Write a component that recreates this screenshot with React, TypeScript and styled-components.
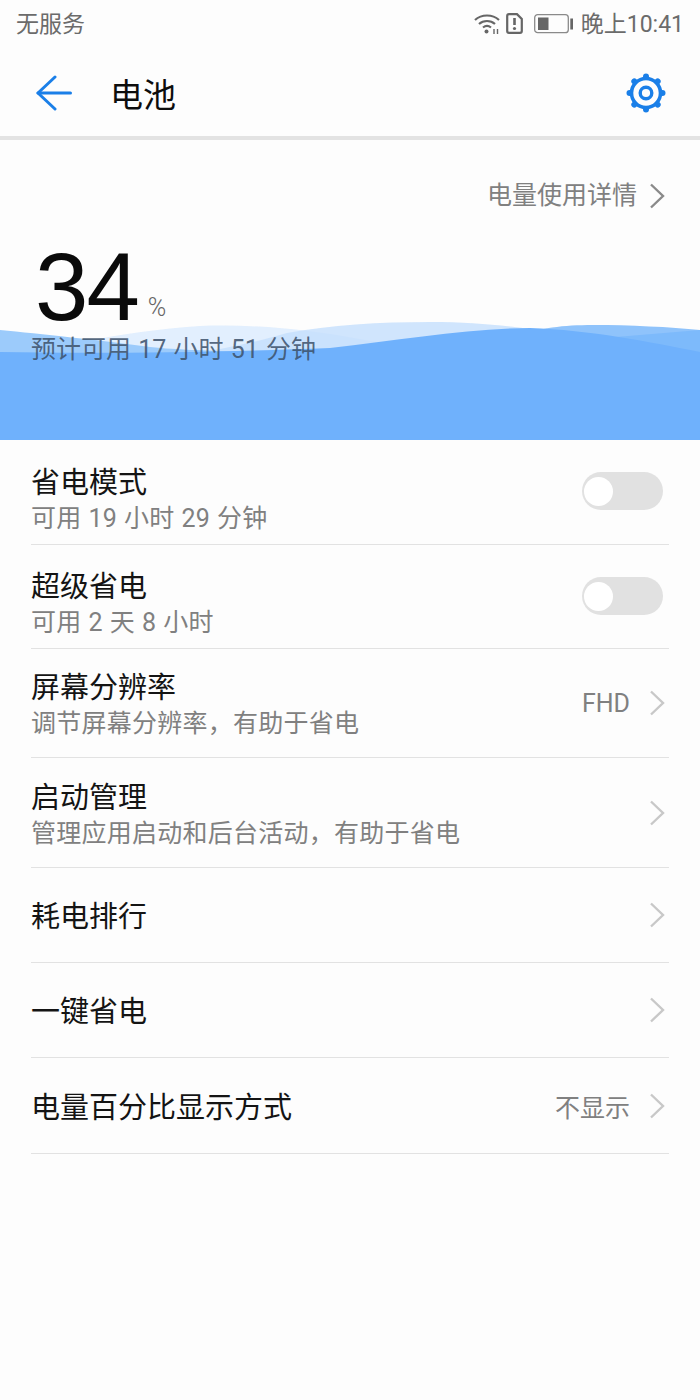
import { ReactNode } from "react";
import styled, { createGlobalStyle } from "styled-components";

const GlobalStyle = createGlobalStyle`
    html, body {
        margin: 0;
        padding: 0;
        background: #fdfdfd;
    }
    * {
        box-sizing: border-box;
    }
    body {
        font-family: Roboto, "Noto Sans CJK SC", sans-serif;
    }
`;

const Page = styled.div`
    width: 700px;
    height: 1400px;
    background: #fdfdfd;
    overflow: hidden;
`;

const StatusBar = styled.div`
    height: 50px;
    padding: 0 16px 6px 16px;
    display: flex;
    align-items: center;
    justify-content: space-between;
    color: #6b6b6b;
    font-size: 23px;
`;

const StatusRight = styled.div`
    display: flex;
    align-items: center;
    gap: 7px;
`;

const StatusIcons = styled.div`
    display: flex;
    align-items: center;
    gap: 6px;
    padding-top: 3px;
`;

const BatterySlot = styled.span`
    display: flex;
    margin-left: 5px;
`;

const Header = styled.header`
    height: 90px;
    padding: 0 34px 0 35px;
    display: flex;
    align-items: center;
    border-bottom: 4px solid #e3e3e3;
`;

const Title = styled.h1`
    margin: 0 0 0 37px;
    flex: 1;
    font-size: 33px;
    font-weight: 400;
    color: #0d0d0d;
`;

const Hero = styled.section`
    position: relative;
    height: 300px;
    overflow: hidden;
`;

const Wave = styled.svg`
    position: absolute;
    left: 0;
    bottom: 0;
    display: block;
`;

const HeroContent = styled.div`
    position: relative;
    height: 100%;
    padding: 38px 31px 0 31px;
    display: flex;
    flex-direction: column;
`;

const DetailLink = styled.div`
    align-self: flex-end;
    display: flex;
    align-items: center;
    gap: 12px;
    padding-right: 4px;
    color: #808080;
    font-size: 25px;
    line-height: 36px;
`;

const Reading = styled.div`
    margin-top: 31px;
    padding-left: 4px;
    display: flex;
    height: 87px;
`;

const Percent = styled.span`
    font-family: "Liberation Sans", Arial, sans-serif;
    font-size: 96px;
    line-height: 84px;
    letter-spacing: -2px;
    color: #0a0a0a;
`;

const PercentSign = styled.span`
    align-self: flex-end;
    margin: 0 0 12px 10px;
    font-size: 25px;
    line-height: 24px;
    font-weight: 300;
    color: #666;
`;

const Estimate = styled.div`
    font-size: 25px;
    line-height: 36px;
    word-spacing: 1px;
    color: rgba(60, 80, 105, 0.85);
`;

const List = styled.div`
    padding: 0 31px;
`;

const Row = styled.div<{ $height: number }>`
    height: ${(p) => p.$height}px;
    display: flex;
    align-items: center;
    justify-content: space-between;
    border-bottom: 1px solid #e2e2e2;
`;

const RowText = styled.div<{ $drop: number }>`
    margin-top: ${(p) => p.$drop}px;
    display: flex;
    flex-direction: column;
`;

const RowTitle = styled.div`
    font-size: 29px;
    line-height: 38px;
    color: #141414;
`;

const RowHint = styled.div`
    font-size: 25px;
    line-height: 34px;
    letter-spacing: 0.25px;
    word-spacing: 0.5px;
    color: #808080;
`;

const RowEnd = styled.div`
    display: flex;
    align-items: center;
    gap: 19px;
    padding-right: 4px;
    color: #808080;
    font-size: 25px;
`;

const Switch = styled.div`
    width: 81px;
    height: 38px;
    margin: 0 6px 2px 0;
    padding: 5px 2px;
    border-radius: 19px;
    background: #e1e1e1;
`;

const Knob = styled.div`
    width: 29px;
    height: 29px;
    border-radius: 50%;
    background: #fff;
`;

function Chevron({ color = "#c8c8c8" }: { color?: string }) {
    return (
        <svg width="16" height="26" viewBox="0 0 16 26" fill="none">
            <path d="M2 1.5 L14 13 L2 24.5" stroke={color} strokeWidth="2.4" />
        </svg>
    );
}

function WifiIcon() {
    return (
        <svg width="26" height="21" viewBox="0 0 26 21" fill="none" stroke="#666" strokeWidth="2.2">
            <path d="M1 7 C7.5 1 18.5 1 25 7" />
            <path d="M5 11 C9.5 7 16.5 7 21 11" />
            <path d="M9 14.5 C11.5 12.5 14.5 12.5 17 14.5" />
            <circle cx="12.5" cy="18.5" r="2" fill="#666" stroke="none" />
            <path d="M20 16 v5 M23.5 16 v5" strokeWidth="1.4" />
        </svg>
    );
}

function SimAlertIcon() {
    return (
        <svg width="17" height="21" viewBox="0 0 17 21" fill="none">
            <path d="M3 1.2 H11 L15.8 6 V18 Q15.8 19.8 14 19.8 H3 Q1.2 19.8 1.2 18 V3 Q1.2 1.2 3 1.2 Z" stroke="#666" strokeWidth="2.2" />
            <path d="M8.5 5 V12" stroke="#666" strokeWidth="2.6" />
            <circle cx="8.5" cy="15.5" r="1.6" fill="#666" />
        </svg>
    );
}

function BatteryIcon() {
    return (
        <svg width="40" height="20" viewBox="0 0 40 20" fill="none">
            <rect x="0.7" y="0.7" width="33.6" height="18" rx="3" stroke="#8a8a8a" strokeWidth="1.3" />
            <rect x="4" y="3.5" width="10.5" height="12.5" fill="#666" />
            <rect x="36.3" y="4.5" width="2.7" height="11" fill="#666" />
        </svg>
    );
}

function BackArrow() {
    return (
        <svg width="38" height="36" viewBox="0 0 38 36" fill="none" stroke="#1a7fe8" strokeWidth="3" strokeLinecap="round" strokeLinejoin="round">
            <path d="M20 2 L3 18 L20 34" />
            <path d="M3 18 H35.5" />
        </svg>
    );
}

function GearIcon() {
    const teeth = [0, 45, 90, 135, 180, 225, 270, 315];
    return (
        <svg width="40" height="40" viewBox="0 0 40 40" fill="none">
            {teeth.map((deg) => (
                <circle key={deg} cx="20" cy="3.5" r="3" fill="#1a7fe8" transform={`rotate(${deg} 20 20)`} />
            ))}
            <circle cx="20" cy="20" r="14.5" stroke="#1a7fe8" strokeWidth="3.6" />
            <circle cx="20" cy="20" r="5.8" stroke="#1a7fe8" strokeWidth="3.4" />
        </svg>
    );
}

// y values in the paths are page coordinates, the viewBox starts at the wave's top
function WaveBackdrop() {
    return (
        <Wave width="700" height="130" viewBox="0 310 700 130">
            <path d="M0 352 C60 350 110 332 200 326 C260 324 310 330 365 340 C410 348 450 350 480 352 V440 H0 Z" fill="#d6e8fd" opacity="0.7" />
            <path d="M150 360 C210 352 250 344 287 333 C330 325 380 322 430 322 C470 322 500 325 530 329 C600 336 650 345 700 352 V440 H150 Z" fill="#c4dffc" opacity="0.8" />
            <path d="M500 340 C540 328 560 325 593 325 C630 325 670 327 700 330 V440 H500 Z" fill="#8fc3fb" />
            <path d="M0 330 C40 334 100 340 150 347 C180 350 200 350 240 352 V440 H0 Z" fill="#9ccbfb" />
            <path d="M400 352 C500 348 600 338 700 330 V440 H400 Z" fill="#7dbafb" />
            <path d="M0 352 C100 354 230 352 330 348 C400 340 470 328 530 328 C590 330 650 342 700 352 V440 H0 Z" fill="#6fb1fc" />
        </Wave>
    );
}

interface SettingRowProps {
    title: string;
    hint?: string;
    height: number;
    drop?: number;
    children: ReactNode;
}

function SettingRow({ title, hint, height, drop = 4, children }: SettingRowProps) {
    return (
        <Row $height={height}>
            <RowText $drop={drop}>
                <RowTitle>{title}</RowTitle>
                {hint && <RowHint>{hint}</RowHint>}
            </RowText>
            {children}
        </Row>
    );
}

const Toggle = () => (
    <Switch>
        <Knob />
    </Switch>
);

export default function App() {
    return (
        <Page>
            <GlobalStyle />
            <StatusBar>
                <span>无服务</span>
                <StatusRight>
                    <StatusIcons>
                        <WifiIcon />
                        <SimAlertIcon />
                        <BatterySlot>
                            <BatteryIcon />
                        </BatterySlot>
                    </StatusIcons>
                    <span>晚上10:41</span>
                </StatusRight>
            </StatusBar>
            <Header>
                <BackArrow />
                <Title>电池</Title>
                <GearIcon />
            </Header>
            <Hero>
                <WaveBackdrop />
                <HeroContent>
                    <DetailLink>
                        电量使用详情
                        <Chevron color="#8a8a8a" />
                    </DetailLink>
                    <Reading>
                        <Percent>34</Percent>
                        <PercentSign>%</PercentSign>
                    </Reading>
                    <Estimate>预计可用 17 小时 51 分钟</Estimate>
                </HeroContent>
            </Hero>
            <List>
                <SettingRow title="省电模式" hint="可用 19 小时 29 分钟" height={105} drop={16}>
                    <Toggle />
                </SettingRow>
                <SettingRow title="超级省电" hint="可用 2 天 8 小时" height={104} drop={14}>
                    <Toggle />
                </SettingRow>
                <SettingRow title="屏幕分辨率" hint="调节屏幕分辨率，有助于省电" height={109}>
                    <RowEnd>
                        FHD
                        <Chevron />
                    </RowEnd>
                </SettingRow>
                <SettingRow title="启动管理" hint="管理应用启动和后台活动，有助于省电" height={110}>
                    <RowEnd>
                        <Chevron />
                    </RowEnd>
                </SettingRow>
                <SettingRow title="耗电排行" height={95}>
                    <RowEnd>
                        <Chevron />
                    </RowEnd>
                </SettingRow>
                <SettingRow title="一键省电" height={95}>
                    <RowEnd>
                        <Chevron />
                    </RowEnd>
                </SettingRow>
                <SettingRow title="电量百分比显示方式" height={96}>
                    <RowEnd>
                        不显示
                        <Chevron />
                    </RowEnd>
                </SettingRow>
            </List>
        </Page>
    );
}
